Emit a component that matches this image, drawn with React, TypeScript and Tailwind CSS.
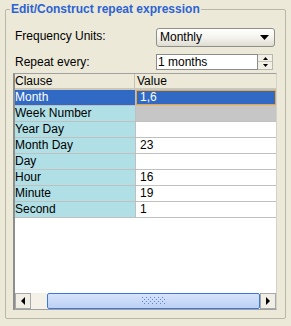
import React from "react";

const rows: { clause: string; value: string; state?: "sel" | "dis" }[] = [
  { clause: "Month", value: "1,6", state: "sel" },
  { clause: "Week Number", value: "", state: "dis" },
  { clause: "Year Day", value: "" },
  { clause: "Month Day", value: "23" },
  { clause: "Day", value: "" },
  { clause: "Hour", value: "16" },
  { clause: "Minute", value: "19" },
  { clause: "Second", value: "1" },
];

function Grip() {
  const dots: React.ReactElement[] = [];
  for (let r = 0; r < 4; r++) {
    for (let c = 0; c < 6; c++) {
      dots.push(
        <rect key={`${r}-${c}`} x={c * 4 + (r % 2) * 2} y={r * 2} width={1} height={1} fill="#5c84c8" />
      );
    }
  }
  return (
    <svg width="24" height="8" viewBox="0 0 24 8">
      {dots}
    </svg>
  );
}

export default function App() {
  return (
    <div className="w-[291px] h-[326px] bg-[#ece9d8] pt-px pl-[5px] font-['Liberation_Sans',Arial,sans-serif] text-[12px] text-black">
      <fieldset className="w-[281px] h-[318px] border border-[#b9b7aa] rounded-[2px]">
        <legend className="ml-[4px] px-[1px] text-[12px] font-bold leading-[16px] text-[#2c63d3]">
          Edit/Construct repeat expression
        </legend>

        <div className="flex items-center h-[19px] mt-[11px] pl-[9px]">
          <div className="w-[141px] leading-[15px] -mt-[3px]">Frequency Units:</div>
          <div className="w-[119px] h-[19px] rounded-[3px] border border-[#8f8f8a] bg-gradient-to-b from-[#ffffff] via-[#f4f3ee] to-[#dedcd2] flex items-center justify-between pl-[3px] pr-[5px]">
            <span className="leading-[15px]">Monthly</span>
            <svg width="9" height="5" viewBox="0 0 9 5">
              <polygon points="0,0 9,0 4.5,5" fill="#000" />
            </svg>
          </div>
        </div>

        <div className="flex items-center h-[16px] mt-[7px] pl-[9px]">
          <div className="w-[141px] leading-[15px]">Repeat every:</div>
          <div className="w-[102px] h-[16px] border border-[#8c8c8c] bg-white flex items-center pl-px leading-[14px]">
            1 months
          </div>
          <div className="w-[15px] h-[16px] flex flex-col border border-l-0 border-[#b8b8b0]">
            <div className="h-[7px] flex items-center justify-center bg-[#f1efe6] border-b border-[#c8c6bb]">
              <svg width="5" height="3" viewBox="0 0 5 3">
                <polygon points="2.5,0 5,3 0,3" fill="#000" />
              </svg>
            </div>
            <div className="flex-1 flex items-center justify-center bg-[#f1efe6]">
              <svg width="5" height="3" viewBox="0 0 5 3">
                <polygon points="0,0 5,0 2.5,3" fill="#000" />
              </svg>
            </div>
          </div>
        </div>

        <div className="ml-[7px] mt-[3px] w-[264px] h-[237px] border-t border-t-[#a0a0a0] border-l-2 border-l-[#8e8e8e] border-r border-r-[#d4d2c8] border-b border-b-[#a0a0a0] bg-white flex flex-col">
          <div className="flex h-[16px] bg-[#ece9d8] border-b-2 border-b-[#cbc7b8] shrink-0">
            <div className="w-[120px] border-r border-r-[#c5c2b2] leading-[14px]">Clause</div>
            <div className="flex-1 pl-[2px] leading-[14px]">Value</div>
          </div>
          <div className="flex-1 flex flex-col">
            {rows.map((r) => (
              <div key={r.clause} className="flex h-[16px] border-b border-b-[#c0c0c0]">
                <div
                  className={
                    r.state === "sel"
                      ? "w-[120px] leading-[15px] bg-[#316ac5] text-white"
                      : "w-[120px] leading-[15px] bg-[#b0dfe6]"
                  }
                >
                  {r.clause}
                </div>
                <div className="w-px bg-[#c0c0c0]" />
                {r.state === "sel" ? (
                  <div className="flex-1 leading-[13px] bg-[#316ac5] text-white border border-[#eba53a] pl-[3px]">
                    {r.value}
                  </div>
                ) : r.state === "dis" ? (
                  <div className="flex-1 bg-[#c6c6c6]" />
                ) : (
                  <div className="flex-1 leading-[15px] pl-[4px]">{r.value}</div>
                )}
              </div>
            ))}
          </div>
          <div className="flex h-[16px] shrink-0">
            <div className="w-[16px] h-[16px] border border-[#a8a8a8] bg-[#f0eee5] flex items-center justify-center">
              <svg width="4" height="8" viewBox="0 0 4 8">
                <polygon points="4,0 4,8 0,4" fill="#000" />
              </svg>
            </div>
            <div className="w-[16px] bg-[#f3f1e8]" />
            <div className="flex-1 h-[16px] border border-[#3c78d8] rounded-[2px] bg-gradient-to-b from-[#d7e3fa] to-[#bcd1f6] flex items-center justify-center">
              <Grip />
            </div>
            <div className="w-[16px] h-[16px] border border-[#a8a8a8] bg-[#f0eee5] flex items-center justify-center">
              <svg width="4" height="8" viewBox="0 0 4 8">
                <polygon points="0,0 4,4 0,8" fill="#000" />
              </svg>
            </div>
          </div>
        </div>
      </fieldset>
    </div>
  );
}
